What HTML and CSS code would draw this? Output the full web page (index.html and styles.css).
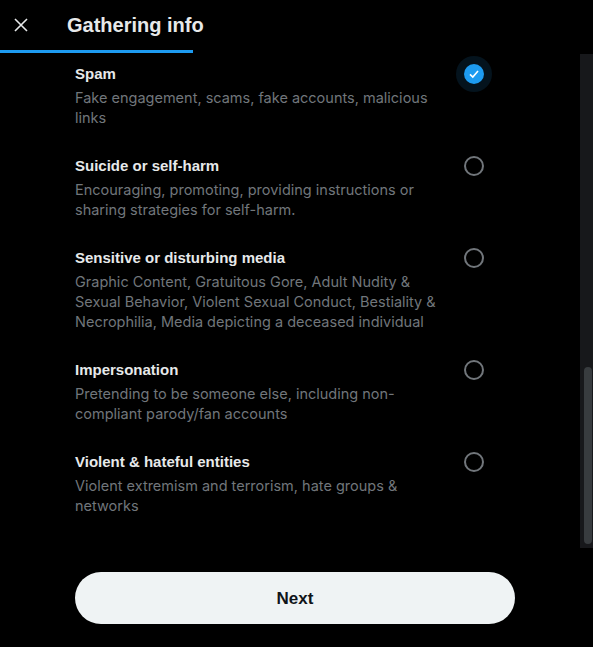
FILE: index.html
```html
<!DOCTYPE html>
<html lang="en">
  <head>
    <meta charset="UTF-8" />
    <meta name="viewport" content="width=device-width, initial-scale=1.0" />
    <title>Gathering info</title>
    <link rel="stylesheet" href="styles.css">
  </head>
  <body>
    <div class="modal">
      <div class="header">
        <div class="close">
          <svg width="14" height="14" viewBox="0 0 14 14">
            <path d="M1 1 L13 13 M13 1 L1 13" stroke="#e7e9ea" stroke-width="1.6" fill="none" />
          </svg>
        </div>
        <h1 class="title">Gathering info</h1>
      </div>
      <div class="progress"><div class="progress-bar"></div></div>
      <div class="body">
        <div class="list">
          <div class="item">
            <div class="item-text">
              <div class="item-title">Spam</div>
              <div class="item-desc">Fake engagement, scams, fake accounts, malicious links</div>
            </div>
            <div class="radio-wrap checked">
              <div class="radio">
                <svg width="12" height="12" viewBox="0 0 12 12">
                  <path d="M2 6.3 L4.8 9 L10 3" stroke="#fff" stroke-width="1.6" fill="none" />
                </svg>
              </div>
            </div>
          </div>
          <div class="item">
            <div class="item-text">
              <div class="item-title">Suicide or self-harm</div>
              <div class="item-desc">Encouraging, promoting, providing instructions or sharing strategies for self-harm.</div>
            </div>
            <div class="radio-wrap"><div class="radio"></div></div>
          </div>
          <div class="item">
            <div class="item-text">
              <div class="item-title">Sensitive or disturbing media</div>
              <div class="item-desc">Graphic Content, Gratuitous Gore, Adult Nudity &amp; Sexual Behavior, Violent Sexual Conduct, Bestiality &amp; Necrophilia, Media depicting a deceased individual</div>
            </div>
            <div class="radio-wrap"><div class="radio"></div></div>
          </div>
          <div class="item">
            <div class="item-text">
              <div class="item-title">Impersonation</div>
              <div class="item-desc">Pretending to be someone else, including non-compliant parody/fan accounts</div>
            </div>
            <div class="radio-wrap"><div class="radio"></div></div>
          </div>
          <div class="item">
            <div class="item-text">
              <div class="item-title">Violent &amp; hateful entities</div>
              <div class="item-desc">Violent extremism and terrorism, hate groups &amp; networks</div>
            </div>
            <div class="radio-wrap"><div class="radio"></div></div>
          </div>
        </div>
        <div class="scrollbar"><div class="thumb"></div></div>
      </div>
      <div class="footer">
        <button class="next-btn">Next</button>
      </div>
    </div>
  </body>
</html>
```

FILE: styles.css
```css
* {
  margin: 0;
  padding: 0;
  box-sizing: border-box;
}
html,
body {
  background-color: #000;
}
body {
  font-family: "Liberation Sans", Arial, sans-serif;
  color: #e7e9ea;
}
.modal {
  width: 593px;
  height: 647px;
  display: flex;
  flex-direction: column;
  background-color: #000;
  border-radius: 0 0 6px 6px;
}
.header {
  height: 50px;
  display: flex;
  align-items: center;
}
.close {
  width: 42px;
  height: 42px;
  display: flex;
  align-items: center;
  justify-content: center;
}
.title {
  margin-left: 25px;
  font-size: 20px;
  font-weight: 700;
  line-height: 24px;
  color: #e7e9ea;
}
.progress {
  height: 3px;
}
.progress-bar {
  width: 193px;
  height: 3px;
  background-color: #1d9bf0;
}
.body {
  height: 494px;
  display: flex;
  margin-top: 1px;
}
.list {
  flex: 1;
  display: flex;
  flex-direction: column;
  gap: 28px;
  padding: 10px 0 0 75px;
}
.item {
  display: flex;
  align-items: flex-start;
}
.item-text {
  width: 379px;
}
.item-title {
  font-size: 15px;
  font-weight: 700;
  line-height: 20px;
  color: #e7e9ea;
}
.item-desc {
  margin-top: 4px;
  font-family: Inter, "Liberation Sans", sans-serif;
  font-size: 14.5px;
  line-height: 20px;
  color: #71767b;
}
.radio-wrap {
  width: 40px;
  height: 20px;
  display: flex;
  align-items: center;
  justify-content: center;
}
.radio {
  width: 20px;
  height: 20px;
  border-radius: 50%;
  border: 2px solid #71767b;
  display: flex;
  align-items: center;
  justify-content: center;
}
.checked .radio {
  border: none;
  background-color: #1d9bf0;
  box-shadow: 0 0 0 8px rgba(29, 155, 240, 0.12);
}
.scrollbar {
  width: 13px;
  background-color: #17181b;
  padding: 313px 1px 3px 4px;
}
.thumb {
  height: 177px;
  border-radius: 4px;
  background-color: #383c3f;
}
.footer {
  padding: 24px 0 0 75px;
}
.next-btn {
  width: 440px;
  height: 52px;
  border: none;
  border-radius: 26px;
  background-color: #eff3f4;
  color: #0f1419;
  font-family: "Liberation Sans", Arial, sans-serif;
  font-size: 17px;
  font-weight: 700;
  padding-top: 1px;
}
```
